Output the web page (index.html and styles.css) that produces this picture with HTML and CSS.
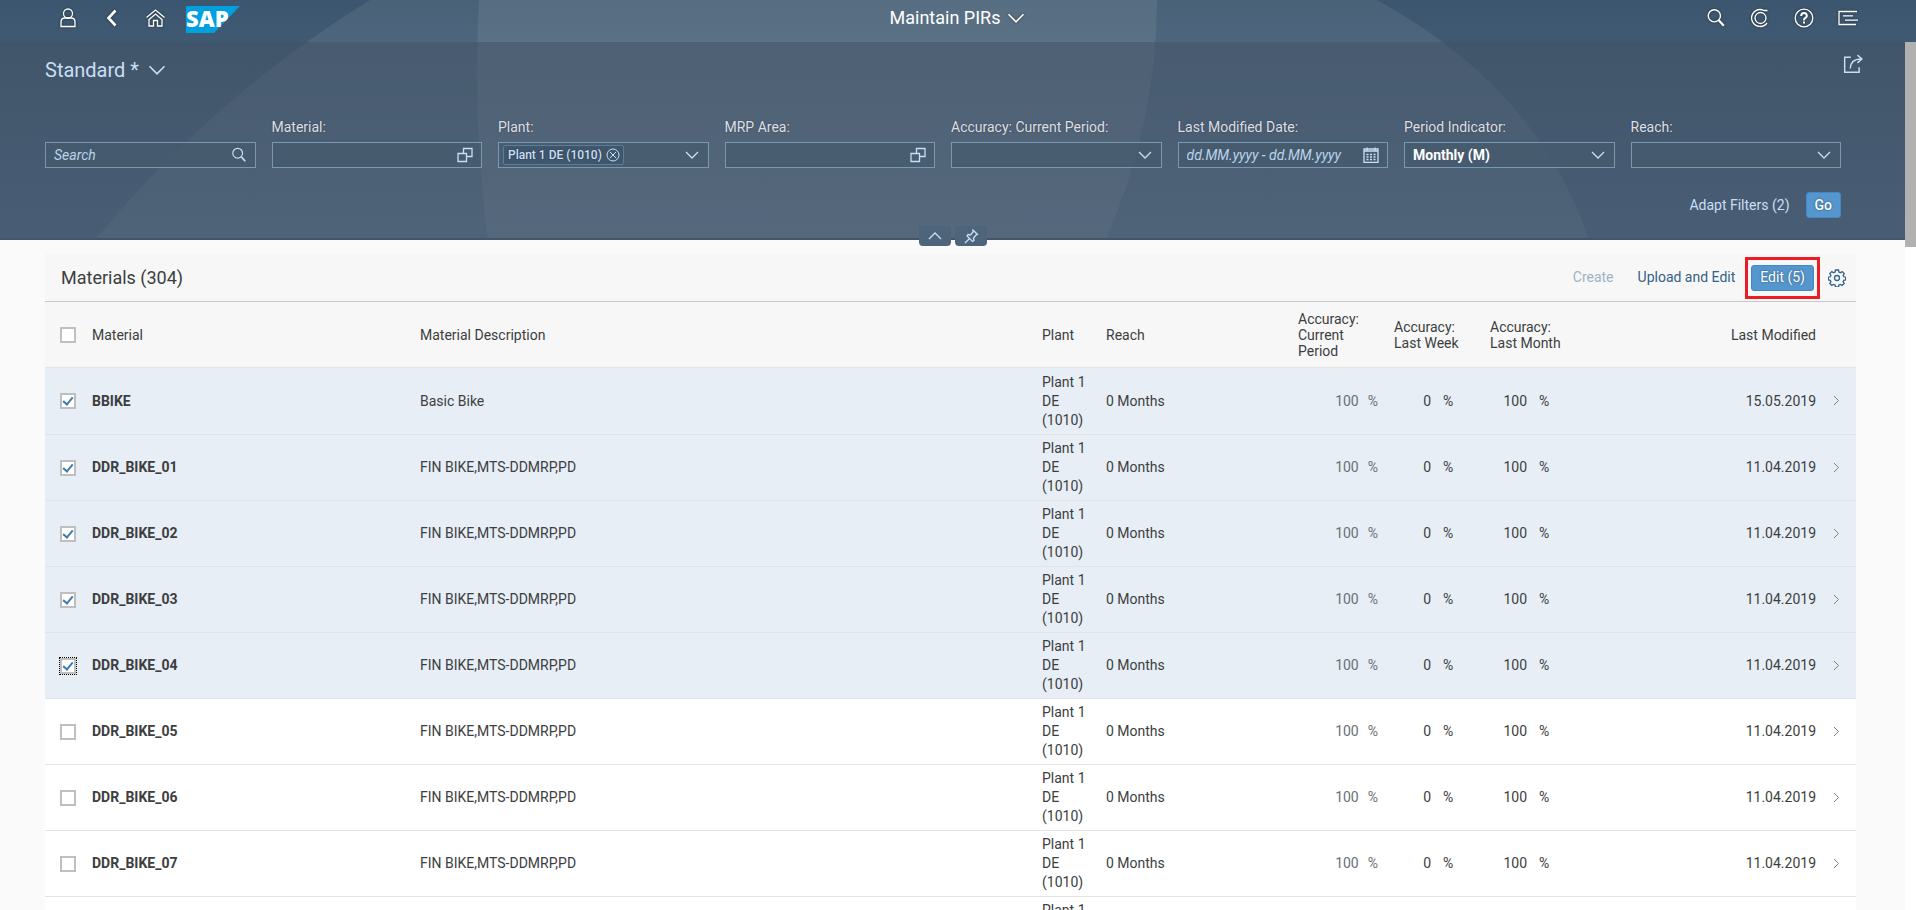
FILE: index.html
```
<!DOCTYPE html>
<html lang="en">
<head>
    <meta charset="UTF-8">
    <meta name="viewport" content="width=device-width, initial-scale=1.0">
    <title>Maintain PIRs</title>
    <link rel="stylesheet" href="styles.css">
</head>
<body>
    <!-- shared icons -->
    <svg class="symbols" aria-hidden="true">
        <symbol id="icon-down" viewBox="0 0 16 16"><path d="M2 5l6 6 6-6"/></symbol>
        <symbol id="icon-up" viewBox="0 0 16 16"><path d="M2 11l6-6 6 6"/></symbol>
        <symbol id="icon-right" viewBox="0 0 16 16"><path d="M6 3l4.500 4.500L6 12"/></symbol>
        <symbol id="icon-search" viewBox="0 0 18 18"><circle cx="7.500" cy="7" r="5.500"/><path class="thick" d="M11.500 11l4.500 5"/></symbol>
        <symbol id="icon-valuehelp" viewBox="0 0 16 16"><path d="M1 6.500h8.500v8H1zM6.500 6.500v-5h8.500v8H9.500"/></symbol>
    </svg>

    <svg class="backdrop" viewBox="0 0 1916 240" preserveAspectRatio="none" aria-hidden="true">
        <path d="M370 0Q215 95 95 240H1589Q1538 88 1377 0z"/>
        <path d="M479 0C475 80 477 160 488 240H1106Q1157 120 1157 0z"/>
    </svg>

    <header class="shell">
        <div class="shell-start">
            <button class="icon-button" aria-label="User">
                <svg class="icon" viewBox="0 0 20 20"><circle cx="10" cy="5.500" r="4.500"/><path d="M3 18.500v-4.500q0-4 4-4h6q4 0 4 4v4.500z"/></svg>
            </button>
            <button class="icon-button" aria-label="Back">
                <svg class="icon back" viewBox="0 0 20 20"><path d="M13.500 2.500L6.500 10l7 7.500"/></svg>
            </button>
            <button class="icon-button" aria-label="Home">
                <svg class="icon" viewBox="0 0 20 20"><path d="M.5 9.500l9-7.500 9 7.500M2.500 12l7-6 7 6M3 11.500V18h4.500v-5.500h4V18H16v-6.500"/></svg>
            </button>
            <a class="logo" href="#" aria-label="SAP home">
                <svg viewBox="0 0 54 27">
                    <path fill="#009fdf" d="M0 0h54L28 27H0z"/>
                    <text x="0" y="21" fill="#fff">SAP</text>
                </svg>
            </a>
        </div>
        <button class="shell-title">Maintain PIRs <svg class="icon"><use href="#icon-down"/></svg></button>
        <div class="shell-end">
            <button class="icon-button" aria-label="Search"><svg class="icon"><use href="#icon-search"/></svg></button>
            <button class="icon-button" aria-label="CoPilot">
                <svg class="icon" viewBox="0 0 20 20"><path d="M17.500 2.500H14Q12 1.500 10 1.500A8.500 8.500 0 1 0 17 15"/><circle cx="10.500" cy="10" r="5.500"/></svg>
            </button>
            <button class="icon-button" aria-label="Help">
                <svg class="icon" viewBox="0 0 20 20"><circle cx="10" cy="10" r="8.800"/><path class="thick" d="M7.200 8q0-3 2.800-3T12.800 8q0 1-1.500 1.900T10 12.400M10 13.600v2"/></svg>
            </button>
            <button class="icon-button" aria-label="Notifications">
                <svg class="icon" viewBox="0 0 20 20"><path d="M19 3.500H1v13h17M5 7.800h10M7 12.200h13"/></svg>
            </button>
        </div>
    </header>

    <div class="viewport">
        <main class="page">
            <section class="filters">
                <div class="variant-row">
                    <button class="variant">Standard * <svg class="icon"><use href="#icon-down"/></svg></button>
                    <button class="icon-button" aria-label="Share">
                        <svg class="icon" viewBox="0 0 18 18"><path d="M7 3H1.500v13.500h13V12M6.500 13q.5-8.500 9.500-8.500M13 1l4 3.500L13 8"/></svg>
                    </button>
                </div>
                <form class="filter-grid">
                    <div class="field">
                        <div class="control">
                            <input type="search" placeholder="Search" aria-label="Search">
                            <svg class="icon"><use href="#icon-search"/></svg>
                        </div>
                    </div>
                    <div class="field">
                        <label for="material">Material:</label>
                        <div class="control">
                            <input type="text" id="material">
                            <svg class="icon"><use href="#icon-valuehelp"/></svg>
                        </div>
                    </div>
                    <div class="field">
                        <label for="plant">Plant:</label>
                        <div class="control tokens">
                            <span class="token">Plant 1 DE (1010)
                                <button type="button" aria-label="Remove"><svg viewBox="0 0 14 14"><circle cx="7" cy="7" r="6"/><path d="M4 4l6 6M10 4l-6 6"/></svg></button>
                            </span>
                            <input type="text" id="plant">
                            <svg class="icon"><use href="#icon-down"/></svg>
                        </div>
                    </div>
                    <div class="field">
                        <label for="area">MRP Area:</label>
                        <div class="control">
                            <input type="text" id="area">
                            <svg class="icon"><use href="#icon-valuehelp"/></svg>
                        </div>
                    </div>
                    <div class="field">
                        <label for="accuracy">Accuracy: Current Period:</label>
                        <div class="control">
                            <select id="accuracy"><option></option></select>
                            <svg class="icon"><use href="#icon-down"/></svg>
                        </div>
                    </div>
                    <div class="field">
                        <label for="modified">Last Modified Date:</label>
                        <div class="control">
                            <input type="text" id="modified" placeholder="dd.MM.yyyy - dd.MM.yyyy">
                            <svg class="icon" viewBox="0 0 16 16"><path d="M1 2h14v13.500H1zM1 4h14M4 .5v3M12 .5v3"/><path class="dots" d="M3.500 7.500h9M3.500 10h9M3.500 12.500h9"/></svg>
                        </div>
                    </div>
                    <div class="field">
                        <label for="period">Period Indicator:</label>
                        <div class="control">
                            <select id="period"><option>Monthly (M)</option></select>
                            <svg class="icon"><use href="#icon-down"/></svg>
                        </div>
                    </div>
                    <div class="field">
                        <label for="reach">Reach:</label>
                        <div class="control">
                            <select id="reach"><option></option></select>
                            <svg class="icon"><use href="#icon-down"/></svg>
                        </div>
                    </div>
                </form>
                <div class="filter-actions">
                    <button class="link-button">Adapt Filters (2)</button>
                    <button class="primary">Go</button>
                </div>
                <div class="header-toggles">
                    <button aria-label="Collapse header"><svg class="icon"><use href="#icon-up"/></svg></button>
                    <button aria-label="Pin header">
                        <svg class="icon" viewBox="0 0 16 16"><path d="M10 2l4.500 4.500-1.500.5-2.500 3 .5 2.500-1.500 1L4 8l1-1.500 2.500.5 2.500-3zM6.500 10.500L2 15"/></svg>
                    </button>
                </div>
            </section>

            <section class="panel">
                <div class="toolbar">
                    <h2>Materials (304)</h2>
                    <button class="text-button" disabled>Create</button>
                    <button class="text-button">Upload and Edit</button>
                    <span class="highlight"><button class="primary">Edit (5)</button></span>
                    <button class="icon-button settings" aria-label="Settings">
                        <svg class="icon" viewBox="0 0 18 18"><circle cx="9" cy="9" r="2.500"/><path d="M7.500 1h3l.4 2 1.500.7 1.800-1.100 2 2-1.100 1.800.6 1.400 2 .4v2.600l-2 .5-.6 1.400 1.100 1.800-2 2-1.800-1.100-1.500.6-.4 2h-3l-.4-2-1.500-.6-1.800 1.100-2-2 1.100-1.800-.6-1.400-2-.5V8.200l2-.4.6-1.400-1.100-1.800 2-2 1.800 1.100L7.100 3z"/></svg>
                    </button>
                </div>
                <table class="materials">
                    <colgroup>
                        <col class="col-check">
                        <col class="col-material">
                        <col>
                        <col class="col-plant">
                        <col class="col-reach">
                        <col class="col-accuracy">
                        <col class="col-accuracy">
                        <col class="col-accuracy">
                        <col class="col-modified">
                        <col class="col-nav">
                    </colgroup>
                    <thead>
                        <tr>
                            <th><input type="checkbox" aria-label="Select all"></th>
                            <th>Material</th>
                            <th>Material Description</th>
                            <th>Plant</th>
                            <th>Reach</th>
                            <th>Accuracy: Current Period</th>
                            <th>Accuracy: Last Week</th>
                            <th>Accuracy: Last Month</th>
                            <th class="date">Last Modified</th>
                            <th></th>
                        </tr>
                    </thead>
                    <tbody id="materialRows"></tbody>
                </table>
            </section>
        </main>
        <div class="scrollbar" aria-hidden="true"><div class="scrollbar-thumb"></div></div>
    </div>

    <script>
        const bike = 'FIN BIKE,MTS-DDMRP,PD';
        const materials = [
            { name: 'BBIKE', description: 'Basic Bike', modified: '15.05.2019', selected: true },
            { name: 'DDR_BIKE_01', description: bike, modified: '11.04.2019', selected: true },
            { name: 'DDR_BIKE_02', description: bike, modified: '11.04.2019', selected: true },
            { name: 'DDR_BIKE_03', description: bike, modified: '11.04.2019', selected: true },
            { name: 'DDR_BIKE_04', description: bike, modified: '11.04.2019', selected: true, focused: true },
            { name: 'DDR_BIKE_05', description: bike, modified: '11.04.2019' },
            { name: 'DDR_BIKE_06', description: bike, modified: '11.04.2019' },
            { name: 'DDR_BIKE_07', description: bike, modified: '11.04.2019' },
            { name: 'DDR_BIKE_08', description: bike, modified: '11.04.2019' }
        ];

        document.getElementById('materialRows').innerHTML = materials.map((item) => `
            <tr class="${item.selected ? 'selected' : ''}">
                <td><input type="checkbox" class="${item.focused ? 'focused' : ''}" aria-label="Select ${item.name}" ${item.selected ? 'checked' : ''}></td>
                <td class="name">${item.name}</td>
                <td>${item.description}</td>
                <td>Plant 1 DE (1010)</td>
                <td>0 Months</td>
                <td><div class="percent current"><span>100</span><span>%</span></div></td>
                <td><div class="percent"><span>0</span><span>%</span></div></td>
                <td><div class="percent"><span>100</span><span>%</span></div></td>
                <td class="date">${item.modified}</td>
                <td class="nav"><svg class="icon"><use href="#icon-right"/></svg></td>
            </tr>`).join('');
    </script>
</body>
</html>
```
FILE: styles.css
```
* {
    box-sizing: border-box;
}

body {
    font-family: Roboto, Arial, sans-serif;
    font-size: 14px;
    line-height: 19px;
    color: #3c3e40;
    background-color: #fafafa;
    margin: 0;
    display: flex;
    flex-direction: column;
    height: 100vh;
    overflow: hidden;
    position: relative;
}

button, input, select {
    font: inherit;
    color: inherit;
    background: none;
    border: none;
    margin: 0;
    padding: 0;
}

button {
    cursor: pointer;
}

.symbols {
    position: absolute;
    width: 0;
    height: 0;
}

.icon {
    width: 16px;
    height: 16px;
    flex: none;
    display: block;
    fill: none;
    stroke: currentColor;
    stroke-width: 1.3;
}

.thick {
    stroke-width: 2;
}

.icon-button {
    display: flex;
}

/* header background behind the shell bar and the filters */
.backdrop {
    position: absolute;
    top: 0;
    left: 0;
    width: 100%;
    height: 240px;
    background: linear-gradient(#3b566e, #405a73 18%, #506c87);
    fill: rgba(255, 255, 255, 0.075);
}

/* shell bar */
.shell {
    position: relative;
    display: grid;
    grid-template-columns: 1fr auto 1fr;
    align-items: center;
    height: 42px;
    flex: none;
    padding: 0 58px 6px;
    color: #ffffff;
    text-shadow: 0 0 2px rgba(0, 0, 0, 0.6);
}

.shell-start, .shell-end {
    display: flex;
    align-items: center;
    gap: 24px;
}

.shell-end {
    justify-content: flex-end;
}

.shell .icon {
    width: 20px;
    height: 20px;
    filter: drop-shadow(0 0 1px rgba(0, 0, 0, 0.5));
}

.shell .back {
    stroke-width: 2.6;
}

.logo {
    margin: 3px 0 0 -4px;
}

.logo svg {
    display: block;
    width: 54px;
    height: 27px;
}

.logo text {
    font-family: "Open Sans", Arial, sans-serif;
    font-size: 22px;
    font-weight: 800;
    text-shadow: none;
}

.shell-title {
    display: flex;
    align-items: center;
    gap: 6px;
    font-size: 18px;
    line-height: 36px;
}

.viewport {
    position: relative;
    display: flex;
    flex: 1;
    min-height: 0;
}

.page {
    flex: 1;
    min-width: 0;
    overflow: hidden;
}

.scrollbar {
    width: 11px;
    background-color: #ffffff;
}

.scrollbar-thumb {
    height: 205px;
    background-color: #b1b1b1;
}

/* filter bar */
.filters {
    position: relative;
    height: 198px;
    padding: 12px 64px 0 45px;
    background-color: rgba(66, 80, 97, 0.5);
    border-bottom: 2px solid #40566c;
    color: #c8dff5;
    text-shadow: 0 0 2px rgba(0, 0, 0, 0.3);
}

.variant-row {
    display: flex;
    justify-content: space-between;
    align-items: flex-start;
    height: 32px;
    margin-right: -22px;
}

.variant {
    display: flex;
    align-items: center;
    gap: 8px;
    font-size: 20px;
    line-height: 32px;
}

.variant-row .icon {
    width: 20px;
    height: 20px;
}

.filter-grid {
    display: grid;
    grid-template-columns: repeat(8, 1fr);
    gap: 16px;
    margin-top: 30px;
}

.field {
    display: flex;
    flex-direction: column;
    justify-content: flex-end;
    height: 52px;
    gap: 5px;
}

.field label {
    color: #dcdfe2;
    line-height: 20px;
}

.control {
    display: grid;
    align-items: center;
    grid-template-columns: 1fr;
    height: 26px;
    border: 1px solid #7a97b3;
    background-color: rgba(70, 90, 110, 0.7);
}

.control > input, .control > select, .control > .icon {
    grid-area: 1 / 1;
}

.control > .icon {
    justify-self: end;
    margin-right: 8px;
    pointer-events: none;
}

.control input, .control select {
    width: 100%;
    min-width: 0;
    height: 24px;
    padding: 0 32px 0 8px;
    appearance: none;
    outline: none;
}

.control select {
    color: #ffffff;
    font-weight: 700;
}

.control input::placeholder {
    color: #b9d4ea;
    font-style: italic;
    opacity: 1;
}

.control .dots {
    stroke-width: 1.6;
    stroke-dasharray: 2 1.5;
}

.control.tokens {
    display: flex;
}

.token {
    display: flex;
    align-items: center;
    gap: 4px;
    flex: none;
    height: 20px;
    margin-left: 4px;
    padding: 0 3px 0 4px;
    border: 1px solid #5b7d9c;
    border-radius: 2px;
    background-color: #40566b;
    font-size: 12px;
    font-weight: 500;
}

.token button {
    display: flex;
}

.token svg {
    width: 14px;
    height: 14px;
    fill: none;
    stroke: currentColor;
}

.filter-actions {
    display: flex;
    justify-content: flex-end;
    align-items: center;
    gap: 16px;
    margin-top: 24px;
}

.primary {
    height: 26px;
    padding: 0 8px;
    background-color: #5496cd;
    border: 1px solid #4289c6;
    border-radius: 3px;
    color: #ffffff;
    text-shadow: 0 0 2px rgba(0, 0, 0, 0.5);
}

.filter-actions .primary {
    font-weight: 500;
}

.header-toggles {
    position: absolute;
    left: 0;
    right: 0;
    bottom: -8px;
    display: flex;
    justify-content: center;
    gap: 4px;
}

.header-toggles button {
    display: flex;
    align-items: center;
    justify-content: center;
    width: 32px;
    height: 20px;
    background-color: #4e647b;
    border-radius: 0 0 4px 4px;
}

/* table */
.panel {
    margin: 14px 49px 0 45px;
}

.toolbar {
    display: flex;
    align-items: center;
    height: 48px;
    padding: 0 10px 0 16px;
    background-color: #f7f7f7;
    border-bottom: 1px solid #c8c8c8;
}

.toolbar h2 {
    flex: 1;
    margin: 0;
    font-size: 18px;
    font-weight: 400;
}

.text-button {
    margin-right: 24px;
    color: #346187;
}

.text-button:disabled {
    color: #9fb4c6;
}

.text-button + .highlight {
    margin-left: -14px;
}

.highlight {
    display: flex;
    padding: 5px 3px;
    border: 3px solid #ed1c24;
}

.settings {
    margin-left: 8px;
    color: #346187;
}

.settings .icon {
    width: 18px;
    height: 18px;
}

.materials {
    width: 100%;
    table-layout: fixed;
    border-collapse: separate;
    border-spacing: 0;
    background-color: #ffffff;
}

.col-check {
    width: 39px;
}

.col-material {
    width: 328px;
}

.col-plant {
    width: 64px;
}

.col-reach {
    width: 192px;
}

.col-accuracy {
    width: 96px;
}

.col-modified {
    width: 246px;
}

.col-nav {
    width: 32px;
}

.materials th, .materials td {
    height: 66px;
    padding: 4px 8px;
    border-bottom: 1px solid #e3e3e3;
    text-align: left;
    vertical-align: middle;
    font-weight: 400;
}

.materials th {
    background-color: #f7f7f7;
    line-height: 16px;
}

.materials tbody tr:first-child td {
    height: 67px;
}

.materials .selected td {
    background-color: #e7eef6;
}

.materials th:first-child, .materials td:first-child {
    padding: 0 0 0 15px;
}

.materials .name {
    font-weight: 700;
}

.materials .date {
    text-align: right;
}

.materials .nav {
    padding: 0;
    color: #808080;
}

.nav .icon {
    margin-left: 4px;
    stroke-width: 1;
}

.percent {
    display: flex;
    gap: 12px;
}

.percent span:first-child {
    width: 37px;
    text-align: right;
}

.percent.current {
    justify-content: flex-end;
    gap: 9px;
    color: #6a7075;
}

input[type="checkbox"] {
    appearance: none;
    display: block;
    width: 16px;
    height: 16px;
    border: 2px solid #bfbfbf;
    background-color: #ffffff;
}

input[type="checkbox"]:checked::after {
    content: "";
    display: block;
    width: 4px;
    height: 8px;
    margin: 0 auto;
    border: solid #427cac;
    border-width: 0 2px 2px 0;
    transform: rotate(40deg);
}

input[type="checkbox"].focused {
    outline: 1px dotted #000000;
}
```
